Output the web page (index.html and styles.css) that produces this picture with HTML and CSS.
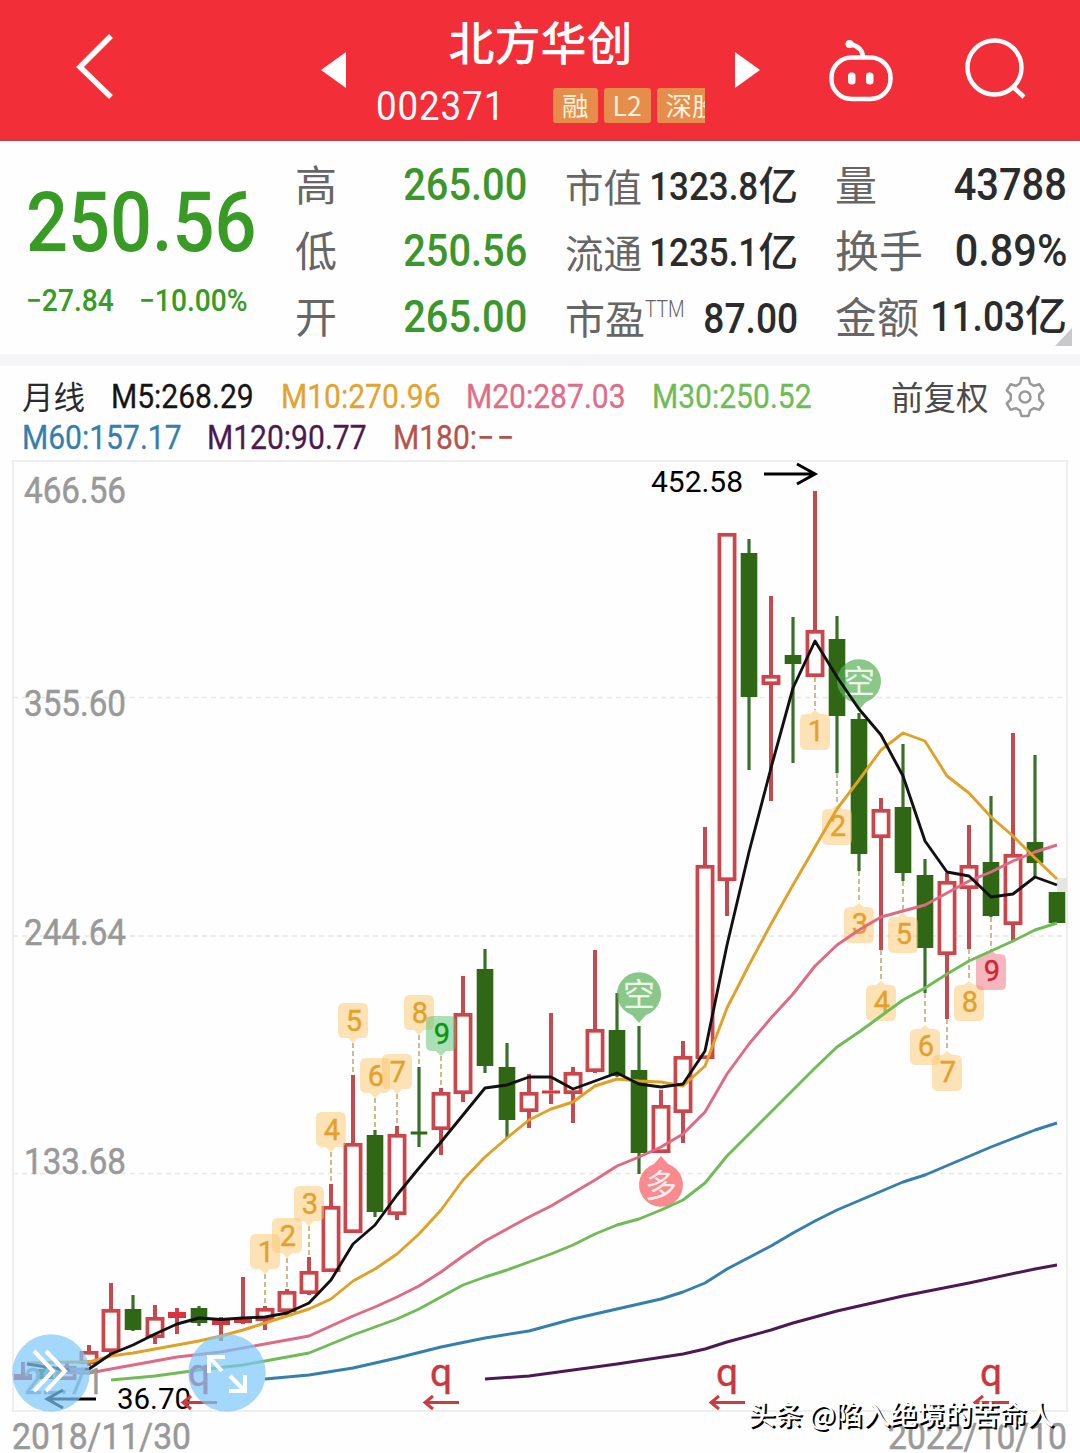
FILE: index.html
```html
<!DOCTYPE html>
<html lang="zh-CN">
<head>
<meta charset="utf-8">
<title>北方华创 002371</title>
<link rel="stylesheet" href="styles.css">
</head>
<body>
<header class="topbar">
  <svg class="back" width="40" height="66" viewBox="0 0 40 66"><path d="M36 3 5 34 36 64"/></svg>
  <svg class="prev" width="25" height="36" viewBox="0 0 25 36"><path d="M25 0v36L0 18z"/></svg>
  <div class="stock">
    <h1>北方华创</h1>
    <div class="stock-sub">
      <span class="code">002371</span>
      <div class="badges"><span>融</span><span>L2</span><span>深股</span></div>
    </div>
  </div>
  <svg class="next" width="25" height="36" viewBox="0 0 25 36"><path d="M0 0v36l25-18z"/></svg>
  <svg class="robot" width="66" height="64" viewBox="0 0 66 64"><rect x="3.500" y="19.500" width="59" height="41.500" rx="20"/><path d="M22 6q13 3 13 14"/><circle cx="21.500" cy="6" r="4"/><rect class="eye" x="20" y="34.500" width="7.500" height="12" rx="3.500"/><rect class="eye" x="38" y="34.500" width="7.500" height="12" rx="3.500"/></svg>
  <svg class="search" width="64" height="64" viewBox="0 0 64 64"><circle cx="30.500" cy="30.500" r="27"/><path d="m48 49 12 11"/></svg>
</header>

<section class="quote">
  <div class="price">
    <div class="last"><span>250.56</span></div>
    <div class="change"><span class="diff">−27.84</span><span class="pct">−10.00%</span></div>
  </div>
  <dl class="col green">
    <div><dt>高</dt><dd><span class="num">265.00</span></dd></div>
    <div><dt>低</dt><dd><span class="num">250.56</span></dd></div>
    <div><dt>开</dt><dd><span class="num">265.00</span></dd></div>
  </dl>
  <dl class="col mid">
    <div><dt>市值</dt><dd><span class="num">1323.8</span>亿</dd></div>
    <div><dt>流通</dt><dd><span class="num">1235.1</span>亿</dd></div>
    <div><dt class="pe">市盈<sup>TTM</sup></dt><dd><span class="num ratio">87.00</span></dd></div>
  </dl>
  <dl class="col">
    <div><dt>量</dt><dd><span class="num">43788</span></dd></div>
    <div><dt class="wide">换手</dt><dd><span class="num turnover">0.89%</span></dd></div>
    <div><dt>金额</dt><dd class="amount"><span class="num">11.03</span>亿</dd></div>
  </dl>
  <i class="expand"></i>
</section>

<section class="legend">
  <div class="averages">
    <span class="period">月线</span>
    <span class="ma m5">M5:268.29</span>
    <span class="ma m10">M10:270.96</span>
    <span class="ma m20">M20:287.03</span>
    <span class="ma m30">M30:250.52</span>
    <span class="adjust">前复权</span>
    <svg class="gear" width="42" height="42" viewBox="0 0 42 42"><path d="M17.500 2h7l1.500 5.500 4 2.300 5.500-1.500 3.700 6.200-4 4v5l4 4-3.700 6.200-5.500-1.500-4 2.300-1.500 5.500h-7L16 34.500l-4-2.300-5.500 1.500-3.700-6.200 4-4v-5l-4-4 3.700-6.200L12 9.800l4-2.300z"/><circle cx="21" cy="21" r="5.500"/></svg>
  </div>
  <div class="averages long">
    <span class="ma m60">M60:157.17</span>
    <span class="ma m120">M120:90.77</span>
    <span class="ma m180">M180:<span class="none">−−</span></span>
  </div>
</section>

<main class="chart">
  <svg id="kline" width="1080" height="995" viewBox="0 458 1080 995"></svg>
</main>
<script src="chart.js"></script>
</body>
</html>
```
FILE: styles.css
```css
* { box-sizing: border-box; }
body {
  margin: 0;
  width: 1080px;
  height: 1453px;
  overflow: hidden;
  background: #fefefe;
  color: #2b2b2b;
  font-family: Roboto, "Noto Sans CJK SC", sans-serif;
}
svg { display: block; flex: none; }

/* title bar */
.topbar {
  display: flex;
  height: 141px;
  background: #f22f39;
  border-bottom: 1px solid #bd404a;
  color: #fff;
}
.back { margin: 33px 0 0 75px; fill: none; stroke: #fff; stroke-width: 5.500px; }
.prev { margin: 52px 0 0 206px; fill: #fff; }
.next { margin: 52px 0 0 30px; fill: #fff; }
.robot { margin: 38px 0 0 68px; fill: none; stroke: #fff; stroke-width: 4.500px; }
.robot circle, .robot .eye { fill: #fff; stroke: none; }
.search { margin: 37px 0 0 70px; fill: none; stroke: #fff; stroke-width: 4.500px; }
.stock { width: 329px; margin-left: 30px; }
.stock h1 {
  margin: 12px 0 0;
  height: 60px;
  font: 500 46px/56px "Noto Sans CJK SC", sans-serif;
  text-align: center;
}
.stock-sub { display: flex; height: 56px; padding-top: 11px; align-items: center; }
.code {
  flex: none;
  width: 177px;
  font-size: 41.500px;
  line-height: 50px;
  letter-spacing: 1px;
  transform: scaleX(.885);
  transform-origin: 0 55%;
}
.badges { display: flex; gap: 6px; width: 152px; overflow: hidden; }
.badges span {
  flex: none;
  height: 35px;
  padding: 0 9px;
  border-radius: 3px;
  background: #e78d4b;
  color: #fff3dc;
  font: 26.500px/34px "Noto Sans CJK SC", sans-serif;
}

/* quote figures */
.quote {
  position: relative;
  display: flex;
  height: 225px;
  padding-top: 11px;
  border-bottom: 12px solid #f5f4f6;
}
.price { flex: none; width: 295px; padding-left: 26px; color: #379b24; }
.last { height: 118px; font-size: 84px; line-height: 142px; font-weight: 500; }
.last span { display: inline-block; transform: scaleX(.88); transform-origin: 0 50%; }
.change { display: flex; font-size: 30.500px; line-height: 60px; padding-top: 1px; font-weight: 500; }
.change span { transform: scaleX(.925); transform-origin: 0 50%; }
.diff { width: 113px; }
.col { flex: none; width: 232px; margin: 0 38px 0 0; }
.col.mid { width: 233px; margin-right: 37px; }
.col > div { display: flex; justify-content: space-between; height: 66px; line-height: 66px; white-space: nowrap; }
dt { flex: none; color: #666; font: 42px/62px "Noto Sans CJK SC", sans-serif; }
dt.wide { font-size: 44px; }
.mid dt { font-size: 38.500px; line-height: 66px; display: flex; }
.mid dt.pe { font-size: 40px; }
.mid sup { font: 300 24px/50px Roboto, sans-serif; transform: scaleX(.8); transform-origin: 0 50%; }
dd { margin: 0; display: flex; justify-content: flex-end; width: 10px; font-size: 45px; font-weight: 500; }
.mid dd { font-size: 39.500px; line-height: 69px; }
.mid .ratio { font-size: 42px; }
.amount { font-size: 42px; }
.num { flex: none; transform: scaleX(.885); transform-origin: 100% 50%; }
.green dd { color: #3b962b; }
.turnover { transform: scaleX(.92); }
.expand {
  position: absolute;
  left: 1055px;
  top: 187px;
  border-left: 17px solid transparent;
  border-bottom: 18px solid #c9c9cb;
}

/* moving averages */
.legend { height: 92px; padding: 10px 0 0 22px; }
.averages {
  display: grid;
  grid-template-columns: 89px 170px 185px 186px 239px 113px 42px;
  height: 41px;
  line-height: 41px;
  white-space: nowrap;
}
.averages.long { grid-template-columns: 185px 186px 186px; }
.period, .adjust { font: 31.500px/39px "Noto Sans CJK SC", sans-serif; }
.adjust { font-size: 32.500px; color: #4a4a4a; }
.ma { font-size: 33px; -webkit-text-stroke: .3px currentColor; transform: scaleX(.91); transform-origin: 0 50%; }
.none { letter-spacing: 3px; }
.gear { fill: none; stroke: #999; stroke-width: 2.500px; stroke-linejoin: round; }
.m5 { color: #151515; }
.m10 { color: #e2a42c; }
.m20 { color: #e06d87; }
.m30 { color: #6fbb55; }
.m60 { color: #357fad; }
.m120 { color: #4c1953; }
.m180 { color: #b6524a; }

/* candlestick chart */
.chart { height: 995px; }
.frame { fill: none; stroke: #e9e9e9; stroke-width: 1.500px; }
.grid { stroke: #e8e8e8; stroke-width: 1.500px; stroke-dasharray: 5 4; }
.axis { fill: #999; font-size: 36px; stroke: #999; stroke-width: .5px; }
.extreme { fill: #000; font-size: 30px; }
.arrow { fill: none; stroke: #000; stroke-width: 3px; }
.up { fill: #fefefe; stroke: #cb454b; stroke-width: 3.700px; }
.up-wick { stroke: #c44a50; stroke-width: 4px; }
.up-flat { fill: #d8343b; }
.down { fill: #2f6714; }
.down-wick { stroke: #39702a; stroke-width: 3.200px; }
.line { fill: none; stroke-width: 2.900px; stroke-linejoin: round; }
.lead { stroke: #a99245; stroke-width: 1.200px; stroke-dasharray: 5 3; }
.tag { fill: #fbc56d; fill-opacity: .5; }
.tag-text { fill: #e3a12c; font-size: 29px; stroke: #e3a12c; stroke-width: .4px; text-anchor: middle; }
.tag.buy { fill: #55c16a; }
.tag-text.buy { fill: #0a960f; stroke: #0a960f; }
.tag.sell { fill: #ee6d7c; }
.tag-text.sell { fill: #cf2338; stroke: #cf2338; }
.short { fill: #58b158; fill-opacity: .7; }
.long-pin { fill: #f7696d; fill-opacity: .78; }
.pin-text { fill: #fff; fill-opacity: .85; font: 32px "Noto Sans CJK SC", sans-serif; text-anchor: middle; }
.right-mark { fill: #c9383c; font-size: 39px; stroke: #c9383c; stroke-width: .4px; text-anchor: middle; }
.right-arrow { fill: none; stroke: #cf3a3e; stroke-width: 3px; }
.disc { fill: #7cc7fb; fill-opacity: .7; }
.disc-icon { fill: none; stroke: #fff; stroke-width: 4px; }
.watermark { fill: #fff; font: 500 27.500px "Noto Sans CJK SC", sans-serif; text-shadow: 2px 1.500px 0 #000; }
```
FILE: chart.js
```js
// Monthly candles: [direction, high, body top, body bottom, low] in chart units.
const candles = [
  ['u',1362,1374,1380,1380],['d',1366,1369,1379,1380],['u',1362,1366,1380,1380],['u',1345,1351,1364,1366],
  ['u',1283,1309,1352,1354],['d',1295,1309,1330,1331],['u',1305,1317,1338,1344],['u',1308,1312,1318,1334],
  ['d',1306,1308,1323,1326],['u',1317,1320,1325,1341],['u',1277,1319,1323,1324],['u',1306,1308,1321,1330],
  ['u',1289,1291,1312,1317],['u',1257,1271,1294,1295],['u',1184,1206,1272,1272],['u',1075,1143,1233,1233],
  ['d',1130,1135,1212,1217],['u',1126,1134,1215,1220],['d',1067,1131.5,1134.5,1147],['u',1088,1092,1130,1155],
  ['u',976,1013,1094,1102],['d',949,969,1066,1073],['d',1043,1067,1120,1138],['u',1074,1092,1112,1128],
  ['u',1013,1090.5,1093.5,1104],['u',1067,1072,1094,1123],['u',950,1029,1072,1073],['d',993,1030,1076,1077],
  ['d',1026,1070,1153,1174],['u',1090,1105,1153,1153],['u',1041,1056,1113,1143],['u',827,865,1059,1059],
  ['u',533,533,881,916],['d',539,553,697,770],['u',596,675,685,801],['d',617,655,664,763],
  ['u',491,630,677,677],['d',616,639,716,773],['d',713,719,854,871],['u',798,809,838,950],
  ['d',744,807,873,881],['d',859,875,948,993],['u',873,881,955,1019],['u',825,865,889,949],
  ['d',796,862,916,917],['u',733,854,925,941],['d',755,842,863,877],['d',892,892,923,923]
];
const averages = [
  ['#4c1953',[485,1379,529,1376,573,1370,617,1364,683,1354,705,1349,727,1342,771,1330,793,1323,837,1311,903,1296,969,1283,1035,1269,1057,1265]],
  ['#357fad',[265,1379,309,1375,353,1368,397,1358,441,1347,485,1338,529,1331,573,1319,617,1309,661,1299,683,1292,705,1283,727,1269,771,1246,793,1233,815,1221,837,1210,870,1196,903,1182,925,1175,991,1147,1035,1130,1057,1123]],
  ['#6fbb55',[111,1380,155,1376,199,1370,243,1365,265,1361,309,1353,331,1344,353,1335,375,1327,397,1319,419,1309,441,1297,463,1285,485,1277,507,1270,529,1262,551,1254,573,1245,595,1234,617,1225,639,1219,661,1210,683,1200,705,1183,727,1156,749,1134,771,1112,793,1090,815,1068,837,1047,859,1032,881,1016,903,1000,925,988,947,974,969,961,991,951,1013,941,1035,930,1057,923]],
  ['#df6a84',[45,1372,89,1373,133,1365,177,1357,221,1352,265,1344,309,1336,331,1326,353,1316,375,1307,397,1297,419,1286,441,1272,463,1256,485,1241,507,1229,529,1217,551,1206,573,1193,595,1180,617,1166,639,1157,661,1147,683,1134,705,1112,727,1074,749,1044,771,1018,793,994,815,966,837,945,859,930,881,917,903,911,925,905,947,893,969,881,991,872,1013,861,1035,852,1057,845]],
  ['#e0a126',[27,1363,67,1362,89,1362,111,1356,133,1353,155,1349,199,1341,221,1336,243,1330,265,1323,287,1316,309,1309,331,1299,353,1281,375,1269,397,1254,419,1234,441,1210,463,1180,485,1157,507,1138,529,1120,551,1109,573,1102,595,1086,617,1079,639,1081,661,1082,683,1086,705,1066,727,1008,749,965,771,924,793,885,815,847,837,809,859,780,881,750,903,733,925,741,947,776,969,793,991,817,1013,836,1035,858,1057,879]],
  ['#111',[27,1364,67,1370,89,1369,111,1354,133,1345,155,1334,177,1324,199,1318,221,1319.5,243,1318,265,1317,287,1313,309,1303,331,1280,353,1244,375,1225,397,1195,419,1168,441,1142,463,1115,485,1088,507,1085,529,1077,551,1077,573,1089,595,1081,617,1073,639,1084,661,1087,683,1084,705,1051,727,945,749,852,771,768,793,688,815,641,837,677,859,709,881,735,903,776,925,841,947,872,969,876,991,897,1013,894,1035,877,1057,885]]
];
// Nine-count tags: [count, x, box top]
const above = [[1,265,1234],[2,287,1218],[3,309,1186],[4,331,1112],[5,353,1003],[6,375,1058],[7,397,1054],[8,419,995],[9,441,1016]];
const below = [[1,815,714],[2,837,809],[3,859,907],[4,881,985],[5,903,917],[6,925,1029],[7,947,1055],[8,969,985],[9,991,954]];

let out = '';
const text = (cls, x, y, s, width) =>
  `<text class="${cls}" x="${x}" y="${y}"${width ? ` textLength="${width}" lengthAdjust="spacingAndGlyphs"` : ''}>${s}</text>`;
const path = (cls, d) => `<path class="${cls}" d="${d}"/>`;

out += '<rect class="frame" x="13" y="461" width="1054" height="950"/>';
[697.5, 936, 1173.5].forEach(y => { out += path('grid', `M13 ${y}H1067`); });
out += '<rect x="1057" y="878" width="10" height="14" fill="#e5e5e5"/>';

candles.forEach(([dir, high, top, bottom, low], i) => {
  const x = 23 + 22 * i;
  if (dir === 'u') {
    out += path('up-wick', `M${x} ${high}V${top}M${x} ${bottom}V${low}`);
    out += bottom - top < 8
      ? `<rect class="up-flat" x="${x - 9}" y="${top}" width="18" height="${bottom - top}"/>`
      : `<rect class="up" x="${x - 7.6}" y="${top + 1.8}" width="15.200" height="${bottom - top - 3.6}"/>`;
  } else {
    out += path('down-wick', `M${x} ${high}V${low}`);
    out += `<rect class="down" x="${x - 8.3}" y="${top}" width="16.600" height="${bottom - top}"/>`;
  }
});

const tag = (n, x, y, up) => {
  const cls = n === 9 ? (up ? ' sell' : ' buy') : '';
  const box = up
    ? `M${x - 9} ${y}h4l5-4 5 4h4q6 0 6 6v24q0 6-6 6h-18q-6 0-6-6v-24q0-6 6-6z`
    : `M${x - 9} ${y}h18q6 0 6 6v23q0 6-6 6h-4l-5 5-5-5h-4q-6 0-6-6v-23q0-6 6-6z`;
  out += path('tag' + cls, box) + text('tag-text' + cls, x + 1, y + (up ? 27 : 28), n);
};
above.forEach(([n, x, y]) => {
  out += path('lead', `M${x} ${y + 40}V${candles[(x - 23) / 22][1]}`);
  tag(n, x, y, false);
});
below.forEach(([n, x, y]) => {
  out += path('lead', `M${x} ${candles[(x - 23) / 22][4]}V${y - 4}`);
  tag(n, x, y, true);
});

const pin = (cls, x, y, s, flip) => {
  out += path(cls, flip
    ? `M${x} ${y - 29}l7 8A22 22 0 1 1 ${x - 7} ${y - 21}z`
    : `M${x} ${y + 29}l-7-8A22 22 0 1 1 ${x + 7} ${y + 21}z`);
  out += text('pin-text', x, y + 12, s);
};
pin('short', 639, 994, '空', false);
pin('short', 859, 681, '空', false);
pin('long-pin', 661, 1185, '多', true);

averages.forEach(([color, p]) => { out += `<polyline class="line" stroke="${color}" points="${p.join(' ')}"/>`; });

[['466.56', 503], ['355.60', 715.5], ['244.64', 944.5], ['133.68', 1173.5], ['22.71', 1394]].forEach(([s, y]) => {
  out += text('axis', 24, y, s, s.length > 5 ? 102 : 80);
});
out += text('axis', 12, 1449, '2018/11/30', 179) + text('axis', 888, 1449, '2022/10/10', 179);
out += text('extreme', 651, 492, '452.58', 92) + path('arrow', 'M764 474H815M797 464l18 10-18 10');
out += text('extreme', 117, 1409, '36.70', 74) + path('arrow', 'M96 1399H47M63 1390l-16 9 16 9');

[199, 441, 727, 991].forEach(x => {
  out += text('right-mark', x, 1385.5, 'q');
  out += path('right-arrow', `M${x + 18} 1402.500H${x - 16}M${x - 8} 1396l-8 6.500 8 6.500`);
});

[51, 227].forEach(x => { out += `<circle class="disc" cx="${x}" cy="1373" r="38.700"/>`; });
out += path('disc-icon', 'M34 1351 53 1371 34 1391M46 1351 65 1371 46 1391');
out += path('disc-icon', 'M222 1371 210 1358M209 1373V1357H225M230 1376 244 1390M245 1375V1391H229');
out += text('watermark', 748, 1425, '头条 @陷入绝境的苦命人', 306);

document.getElementById('kline').innerHTML = out;
```
